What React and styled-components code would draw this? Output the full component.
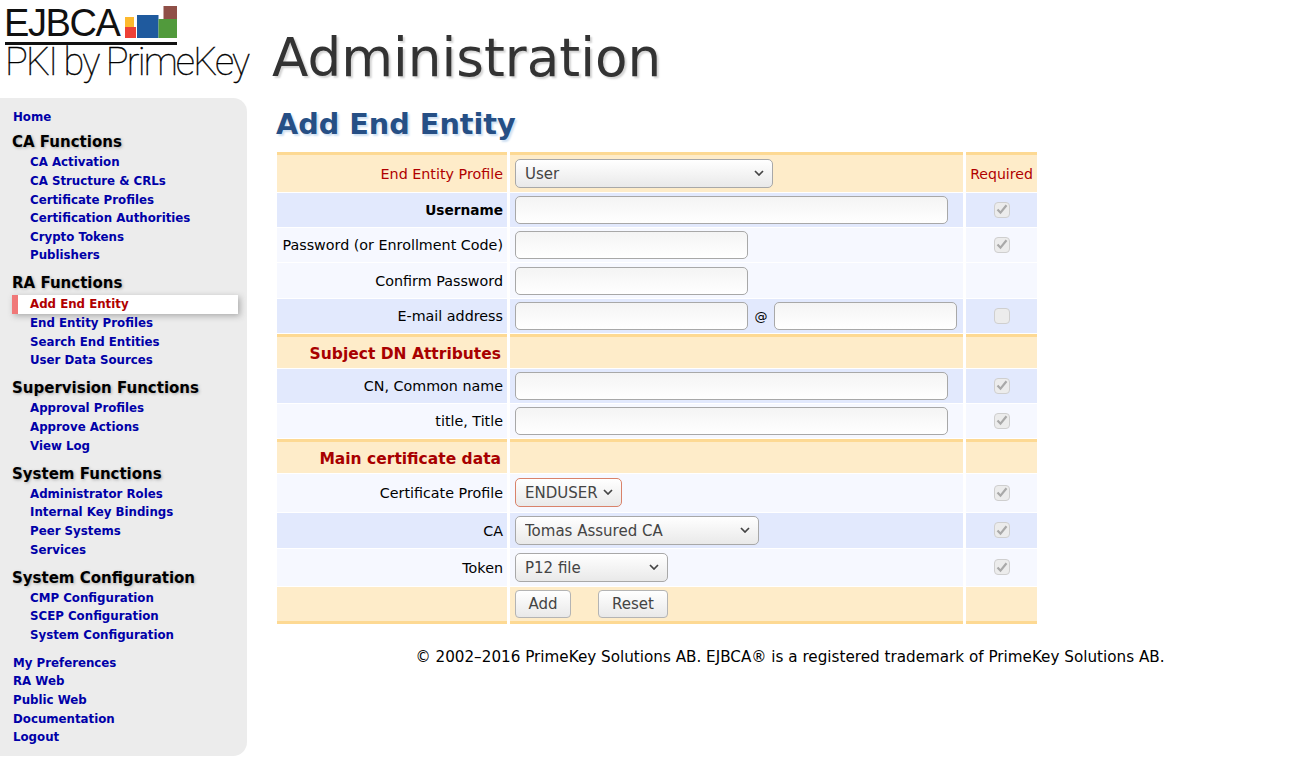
import React from "react";
import styled, { createGlobalStyle } from "styled-components";

const GlobalStyle = createGlobalStyle`
  html, body {
    margin: 0;
    padding: 0;
    background: #fff;
    font-family: "DejaVu Sans", sans-serif;
    color: #000;
  }
`;

const NAV = [
  { title: "CA Functions", links: ["CA Activation", "CA Structure & CRLs", "Certificate Profiles", "Certification Authorities", "Crypto Tokens", "Publishers"] },
  { title: "RA Functions", links: ["Add End Entity", "End Entity Profiles", "Search End Entities", "User Data Sources"] },
  { title: "Supervision Functions", links: ["Approval Profiles", "Approve Actions", "View Log"] },
  { title: "System Functions", links: ["Administrator Roles", "Internal Key Bindings", "Peer Systems", "Services"] },
  { title: "System Configuration", links: ["CMP Configuration", "SCEP Configuration", "System Configuration"] },
];

const BOTTOM_LINKS = ["My Preferences", "RA Web", "Public Web", "Documentation", "Logout"];

function Chevron() {
  return (
    <ChevronIcon width="10" height="6" viewBox="0 0 10 6">
      <path d="M1 1l4 4 4-4" fill="none" stroke="#444" strokeWidth="1.7" />
    </ChevronIcon>
  );
}

function Required({ checked }) {
  return (
    <CheckBox>
      {checked && (
        <svg width="12" height="11" viewBox="0 0 12 11">
          <path d="M1.5 5.5l3 3.2 6-7.4" fill="none" stroke="#a9a9a9" strokeWidth="2.2" />
        </svg>
      )}
    </CheckBox>
  );
}

function Dropdown({ width, accent, value }) {
  return (
    <SelectWrap $width={width}>
      <Select $accent={accent} defaultValue={value}>
        <option>{value}</option>
      </Select>
      <Chevron />
    </SelectWrap>
  );
}

function App() {
  return (
    <>
      <GlobalStyle />
      <Header>
        <Logo>
          <LogoTop>
            <LogoName>EJBCA</LogoName>
            <svg width="57" height="33" viewBox="0 0 57 33">
              <rect x="5" y="12" width="9" height="10" fill="#fdb92e" />
              <rect x="5" y="22" width="11" height="11" fill="#ee4036" />
              <rect x="17" y="10" width="21.5" height="23" fill="#1f5a9e" />
              <rect x="38.5" y="14" width="18.5" height="19" fill="#519a3c" />
              <rect x="43.5" y="1" width="13.5" height="13" fill="#8f4f47" />
            </svg>
          </LogoTop>
          <LogoRule />
          <LogoTagline>PKI by PrimeKey</LogoTagline>
        </Logo>
        <AppTitle>Administration</AppTitle>
      </Header>
      <Body>
        <Sidebar>
          <NavLink $top>Home</NavLink>
          {NAV.map((group) => (
            <NavGroup key={group.title}>
              <GroupTitle>{group.title}</GroupTitle>
              {group.links.map((link) =>
                link === "Add End Entity" ? (
                  <ActiveLink key={link}>{link}</ActiveLink>
                ) : (
                  <NavLink key={link}>{link}</NavLink>
                )
              )}
            </NavGroup>
          ))}
          <BottomLinks>
            {BOTTOM_LINKS.map((link) => (
              <NavLink $top key={link}>{link}</NavLink>
            ))}
          </BottomLinks>
        </Sidebar>
        <Main>
          <PageTitle>Add End Entity</PageTitle>
          <Table>
            <tbody>
              <Row $kind="section" $height={40} $first>
                <LabelCell $red>End Entity Profile</LabelCell>
                <FieldCell><Dropdown width={258} value="User" /></FieldCell>
                <ReqCell $red>Required</ReqCell>
              </Row>
              <Row $kind="even" $height={34}>
                <LabelCell><UserLabel>Username</UserLabel></LabelCell>
                <FieldCell><TextInput $width={433} /></FieldCell>
                <ReqCell><Required checked /></ReqCell>
              </Row>
              <Row $kind="odd" $height={34}>
                <LabelCell>Password (or Enrollment Code)</LabelCell>
                <FieldCell><TextInput $width={233} /></FieldCell>
                <ReqCell><Required checked /></ReqCell>
              </Row>
              <Row $kind="odd" $height={35}>
                <LabelCell>Confirm Password</LabelCell>
                <FieldCell><TextInput $width={233} /></FieldCell>
                <ReqCell />
              </Row>
              <Row $kind="even" $height={34}>
                <LabelCell>E-mail address</LabelCell>
                <FieldCell>
                  <EmailFields>
                    <TextInput $width={233} />
                    <AtSign>@</AtSign>
                    <TextInput $width={183} />
                  </EmailFields>
                </FieldCell>
                <ReqCell><Required /></ReqCell>
              </Row>
              <Row $kind="section" $height={34} $first>
                <SectionCell>Subject DN Attributes</SectionCell>
                <FieldCell />
                <ReqCell />
              </Row>
              <Row $kind="even" $height={34}>
                <LabelCell>CN, Common name</LabelCell>
                <FieldCell><TextInput $width={433} /></FieldCell>
                <ReqCell><Required checked /></ReqCell>
              </Row>
              <Row $kind="odd" $height={34}>
                <LabelCell>title, Title</LabelCell>
                <FieldCell><TextInput $width={433} /></FieldCell>
                <ReqCell><Required checked /></ReqCell>
              </Row>
              <Row $kind="section" $height={34} $first>
                <SectionCell>Main certificate data</SectionCell>
                <FieldCell />
                <ReqCell />
              </Row>
              <Row $kind="odd" $height={38}>
                <LabelCell>Certificate Profile</LabelCell>
                <FieldCell $lift><Dropdown width={107} accent value="ENDUSER" /></FieldCell>
                <ReqCell><Required checked /></ReqCell>
              </Row>
              <Row $kind="even" $height={35}>
                <LabelCell>CA</LabelCell>
                <FieldCell><Dropdown width={244} value="Tomas Assured CA" /></FieldCell>
                <ReqCell><Required checked /></ReqCell>
              </Row>
              <Row $kind="odd" $height={37}>
                <LabelCell>Token</LabelCell>
                <FieldCell><Dropdown width={153} value="P12 file" /></FieldCell>
                <ReqCell><Required checked /></ReqCell>
              </Row>
              <Row $kind="section" $height={37} $last>
                <LabelCell />
                <FieldCell>
                  <Buttons>
                    <Button $width={56}>Add</Button>
                    <Button $width={70}>Reset</Button>
                  </Buttons>
                </FieldCell>
                <ReqCell />
              </Row>
            </tbody>
          </Table>
          <Footer>© 2002–2016 PrimeKey Solutions AB. EJBCA® is a registered trademark of PrimeKey Solutions AB.</Footer>
        </Main>
      </Body>
    </>
  );
}

const Header = styled.header`
  display: flex;
  height: 98px;
  align-items: flex-start;
`;
const Logo = styled.div`
  width: 272px;
  padding: 6px 0 0 5px;
  box-sizing: border-box;
  flex: none;
`;
const LogoTop = styled.div`
  display: flex;
  width: 172px;
  height: 32px;
  align-items: flex-end;
  justify-content: space-between;
`;
const LogoName = styled.span`
  font-family: "Liberation Sans", sans-serif;
  font-size: 38px;
  line-height: 30px;
  letter-spacing: -1.4px;
  margin-left: -1px;
  color: #111;
`;
const LogoRule = styled.div`
  width: 172px;
  height: 3px;
  margin-top: 4px;
  background: #111;
`;
const LogoTagline = styled.div`
  font-family: "Roboto", sans-serif;
  font-weight: 100;
  font-size: 38px;
  line-height: 34px;
  letter-spacing: -1.85px;
  white-space: nowrap;
  color: #000;
  -webkit-text-stroke: 0.35px #000;
`;
const AppTitle = styled.h1`
  margin: 25px 0 0;
  font-size: 53.2px;
  line-height: 66px;
  font-weight: 400;
  color: #333;
  text-shadow: 2px 2px 2px #d4d4d4;
`;
const Body = styled.div`
  display: flex;
  align-items: flex-start;
`;
const Sidebar = styled.nav`
  width: 247px;
  height: 658px;
  box-sizing: border-box;
  padding: 10px 9px 0 13px;
  background: #ececec;
  border-radius: 0 14px 14px 0;
  flex: none;
`;
const NavGroup = styled.div`
  margin-top: 5.5px;
  margin-bottom: 8.35px;
`;
const GroupTitle = styled.div`
  font-size: 15px;
  font-weight: 700;
  line-height: 21.3px;
  margin-left: -1px;
  color: #000;
  text-shadow: 1px 1px 3px #aaa;
`;
const NavLink = styled.a`
  display: block;
  height: 18.6px;
  line-height: 18.6px;
  margin-left: ${(p) => (p.$top ? "0" : "17px")};
  font-size: 11.8px;
  font-weight: 700;
  color: #0000a8;
  white-space: nowrap;
`;
const ActiveLink = styled.a`
  display: block;
  height: 19px;
  line-height: 19px;
  margin: 0.4px 0 0 -1px;
  padding-left: 12px;
  font-size: 11.8px;
  font-weight: 700;
  color: #b00000;
  background: #fff;
  border-left: 6px solid #f07878;
  box-shadow: 2px 2px 6px #aaa;
  white-space: nowrap;
`;
const BottomLinks = styled.div`
  margin-top: 9.2px;
`;
const Main = styled.main`
  flex: 1;
  min-width: 0;
  padding-left: 25px;
`;
const PageTitle = styled.h2`
  margin: 6px 0 7px 4px;
  font-size: 28.7px;
  line-height: 40px;
  font-weight: 700;
  color: #264f85;
  text-shadow: 2px 2px 2px #cfe0f2;
`;
const Table = styled.table`
  border-collapse: separate;
  border-spacing: 3px 1px;
  margin: 0 0 0 2px;
  table-layout: fixed;
  width: 766px;
`;
const ROW_BACKGROUNDS = { section: "#feecc9", even: "#e2e9fd", odd: "#f6f8ff" };
const Row = styled.tr`
  height: ${(p) => p.$height}px;
  & > td {
    background: ${(p) => ROW_BACKGROUNDS[p.$kind]};
    ${(p) => p.$first && "border-top: 3px solid #fdd993;"}
    ${(p) => p.$last && "border-bottom: 3px solid #fdd993;"}
  }
`;
const LabelCell = styled.td`
  width: 230px;
  box-sizing: border-box;
  padding: 0 4px 0 0;
  text-align: right;
  font-size: 14.3px;
  white-space: nowrap;
  color: ${(p) => (p.$red ? "#b00000" : "#000")};
`;
const UserLabel = styled.strong`
  font-size: 13.7px;
`;
const SectionCell = styled.td`
  box-sizing: border-box;
  padding: 2px 6px 0 0;
  text-align: right;
  font-size: 15.5px;
  font-weight: 700;
  color: #a80000;
  white-space: nowrap;
`;
const FieldCell = styled.td`
  width: 453px;
  box-sizing: border-box;
  padding: 0 0 ${(p) => (p.$lift ? "2px" : "0")} 5px;
`;
const ReqCell = styled.td`
  width: 71px;
  box-sizing: border-box;
  text-align: center;
  font-size: 14.1px;
  color: ${(p) => (p.$red ? "#b00000" : "#000")};
`;
const TextInput = styled.input`
  display: block;
  box-sizing: border-box;
  width: ${(p) => p.$width}px;
  height: 28px;
  padding: 0 8px;
  border: 1px solid #a8a8a8;
  border-radius: 5px;
  background: linear-gradient(#f4f4f4, #fff);
  outline: none;
`;
const EmailFields = styled.div`
  display: flex;
  align-items: center;
`;
const AtSign = styled.span`
  width: 26px;
  text-align: center;
  font-size: 13px;
`;
const SelectWrap = styled.div`
  position: relative;
  width: ${(p) => p.$width}px;
  height: 29px;
`;
const Select = styled.select`
  appearance: none;
  display: block;
  box-sizing: border-box;
  width: 100%;
  height: 100%;
  padding: 1px 9px 0;
  border: 1px solid ${(p) => (p.$accent ? "#d9826a" : "#a8a8a8")};
  border-radius: 5px;
  background: linear-gradient(#fff, #e9e9e9);
  font-family: "DejaVu Sans", sans-serif;
  font-size: 15px;
  color: #444;
  outline: none;
`;
const ChevronIcon = styled.svg`
  position: absolute;
  right: 9px;
  top: 11px;
  pointer-events: none;
`;
const CheckBox = styled.span`
  display: inline-flex;
  align-items: center;
  justify-content: center;
  box-sizing: border-box;
  width: 16px;
  height: 16px;
  margin-bottom: 1px;
  vertical-align: middle;
  border: 1px solid #cfcfcf;
  border-radius: 4px;
  background: #ececec;
`;
const Buttons = styled.div`
  display: flex;
  gap: 27px;
`;
const Button = styled.button`
  box-sizing: border-box;
  width: ${(p) => p.$width}px;
  height: 28px;
  padding: 0;
  border: 1px solid #b4b4b4;
  border-radius: 4px;
  background: linear-gradient(#fff, #e9e9e9);
  font-family: "DejaVu Sans", sans-serif;
  font-size: 15px;
  color: #444;
`;
const Footer = styled.footer`
  margin: 22px 0 0 0;
  text-align: center;
  font-size: 15.2px;
  line-height: 20px;
  color: #000;
`;

export default App;
